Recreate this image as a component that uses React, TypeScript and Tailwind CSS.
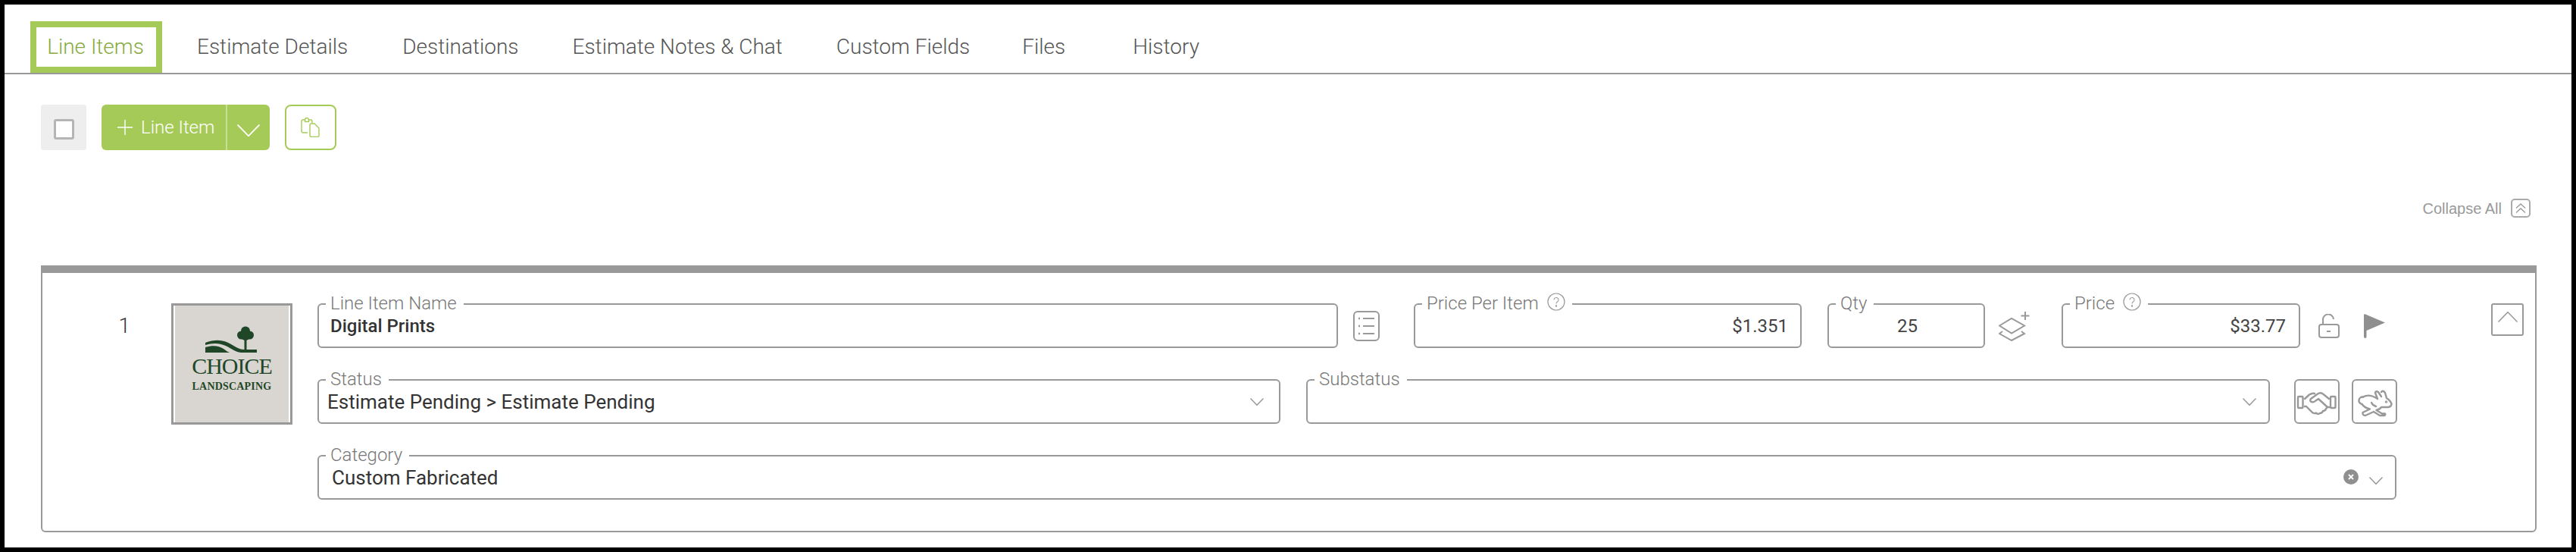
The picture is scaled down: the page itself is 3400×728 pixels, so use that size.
import React from "react";

const font = "font-['Roboto',sans-serif]";

function Help() {
  return (
    <svg width="24" height="24" viewBox="0 0 24 24" fill="none" stroke="#999" strokeWidth="1.2" className="ml-[11px] shrink-0 -mt-[4px]">
      <circle cx="12" cy="12" r="11" />
      <path d="M9 9.5a3 3 0 1 1 4.6 2.5c-1 .7-1.6 1.2-1.6 2.5" strokeWidth="1.1" />
      <circle cx="12" cy="17.5" r=".6" fill="#999" />
    </svg>
  );
}

function Chevron({ w = 18, h = 10, color = "#999", sw = 1.5, up = false }: { w?: number; h?: number; color?: string; sw?: number; up?: boolean }) {
  return (
    <svg width={w} height={h} viewBox={`0 0 ${w} ${h}`} fill="none" stroke={color} strokeWidth={sw} className="shrink-0">
      <path d={up ? `M0.5 ${h - 0.5}L${w / 2} 0.7L${w - 0.5} ${h - 0.5}` : `M0.5 0.5L${w / 2} ${h - 0.7}L${w - 0.5} 0.5`} />
    </svg>
  );
}

function Field({ label, help, className, children }: { label: string; help?: boolean; className: string; children?: React.ReactNode }) {
  return (
    <div className={`relative h-[59px] border-2 border-[#999] rounded-[6px] flex items-center ${className}`}>
      <div className="absolute -top-[17px] left-[9px] h-[30px] pl-[6px] pr-[9px] bg-white flex items-center text-[24px] font-light text-[#777] whitespace-nowrap leading-none">
        {label}
        {help && <Help />}
      </div>
      {children}
    </div>
  );
}

const tabs: [string, string][] = [
  ["Estimate Details", "ml-[46px] mr-[36px]"],
  ["Destinations", "ml-[36px] mr-[36px]"],
  ["Estimate Notes & Chat", "ml-[35px] mr-[37px]"],
  ["Custom Fields", "ml-[34px] mr-[36px]"],
  ["Files", "ml-[33px] mr-[45px]"],
  ["History", "ml-[44px]"],
];

function Logo() {
  return (
    <div className="w-[160px] h-[160px] shrink-0 border-[3px] border-[#999] bg-white px-[2px]">
      <div className="h-full bg-[#d9d6d1] flex flex-col items-center pt-[27px]">
        <svg width="68" height="36" viewBox="0 0 68 36" className="-ml-[2px] shrink-0">
          <g fill="#1f4727">
            <circle cx="53" cy="6.500" r="6" />
            <circle cx="47.500" cy="12" r="5.500" />
            <circle cx="58.500" cy="12" r="5.500" />
            <circle cx="53" cy="13" r="6" />
            <path d="M51.500 14h3v18h-3z" />
            <path d="M0 22c15-6 26-3 34 2 7 4 11 7 17 7h17v4H47c-8-1-12-5-18-8C19 22 10 22 0 25z" />
            <path d="M0 28c10-3 18-2 24 2 3 2 5 4 8 5H0z" />
          </g>
        </svg>
        <div className="font-['Liberation_Serif',serif] text-[#1f4727] text-[30px] leading-none mt-[2px] tracking-[-1px] whitespace-nowrap">CHOICE</div>
        <div className="font-['Liberation_Serif',serif] text-[#1f4727] text-[14px] leading-none mt-[5px] tracking-[0.2px] font-bold whitespace-nowrap">LANDSCAPING</div>
      </div>
    </div>
  );
}

export default function App() {
  return (
    <div className={`${font} h-[728px] w-[3400px] border-[6px] border-black bg-white flex flex-col overflow-hidden`}>
      {/* Tabs */}
      <div className="h-[92px] border-b-2 border-[#999] flex items-end pl-[34px] shrink-0">
        <div className="h-[68px] w-[174px] border-[8px] border-[#a6ca58] flex items-center justify-center text-[28px] font-light text-[#86ab3c] whitespace-nowrap leading-none pr-[2px]">
          Line Items
        </div>
        {tabs.map(([t, m]) => (
          <div key={t} className={`h-[68px] flex items-center text-[28px] font-light text-[#555] whitespace-nowrap leading-none ${m}`}>
            {t}
          </div>
        ))}
      </div>

      {/* Toolbar */}
      <div className="flex items-stretch h-[60px] mt-[40px] ml-[48px] shrink-0">
        <div className="w-[60px] bg-[#eeeeee] rounded-[4px] flex items-center justify-center">
          <div className="w-[27px] h-[27px] mt-[5px] bg-white border-[3px] border-[#b5b5b5] rounded-[3px]" />
        </div>
        <div className="ml-[20px] w-[222px] bg-[#a6ca58] rounded-[6px] flex items-center text-white">
          <svg width="20" height="20" viewBox="0 0 20 20" stroke="white" strokeWidth="1.4" className="ml-[21px] shrink-0">
            <path d="M10 0v20M0 10h20" />
          </svg>
          <span className="ml-[11px] text-[24px] font-light whitespace-nowrap leading-none">Line Item</span>
          <div className="ml-[15px] h-full w-[2px] bg-[#c9df95] shrink-0" />
          <div className="flex-1 flex justify-center pt-[8px]">
            <Chevron w={30} h={16} color="white" sw={1.8} />
          </div>
        </div>
        <div className="ml-[20px] w-[68px] border-2 border-[#a6ca58] rounded-[8px] flex items-center justify-center">
          <svg width="26" height="26" viewBox="0 0 26 26" fill="none" stroke="#a6ca58" strokeWidth="1.4">
            <path d="M9 20H3a2 2 0 0 1-2-2V5a2 2 0 0 1 2-2h2.500a2.500 2.500 0 0 1 5 0H13a2 2 0 0 1 2 2v2" />
            <path d="M5.500 3v2.500h5V3" />
            <path d="M14 8h4l6 6v9.500a2 2 0 0 1-2 2h-8a2 2 0 0 1-2-2V10a2 2 0 0 1 2-2z" />
          </svg>
        </div>
      </div>

      {/* Collapse all */}
      <div className="flex items-center justify-end h-[25px] mt-[64px] mr-[54px] shrink-0">
        <span className="font-['Liberation_Sans',sans-serif] text-[20px] text-[#999] leading-none whitespace-nowrap">Collapse All</span>
        <div className="ml-[12px] w-[26px] h-[25px] border-2 border-[#aaa] rounded-[5px] flex items-center justify-center">
          <svg width="16" height="14" viewBox="0 0 16 14" fill="none" stroke="#999" strokeWidth="1.3">
            <path d="M2 6.500L8 1l6 5.500M2 12.500L8 7l6 5.500" />
          </svg>
        </div>
      </div>

      {/* Card */}
      <div className="mt-[63px] ml-[48px] w-[3294px] h-[352px] border-2 border-t-[10px] border-[#999] rounded-b-[6px] flex pt-[40px] shrink-0 items-start">
        <div className="w-[170px] shrink-0 flex justify-end pr-[54px] pt-[16px] text-[28px] font-light text-[#333] leading-none">1</div>
        <Logo />
        <div className="ml-[33px] w-[2744px] shrink-0 flex flex-col gap-[41px]">
          {/* Row 1 */}
          <div className="flex items-center">
            <Field label="Line Item Name" className="w-[1347px] shrink-0 pl-[15px]">
              <span className="text-[24px] font-medium text-[#333] leading-none whitespace-nowrap">Digital Prints</span>
            </Field>
            <svg width="35" height="40" viewBox="0 0 35 40" fill="none" stroke="#999" strokeWidth="2" className="ml-[20px] shrink-0">
              <rect x="1" y="1" width="33" height="38" rx="5" />
              <path d="M7 10h2M7 20h2M7 30h2" strokeWidth="2.500" />
              <path d="M13 10h15M13 20h15M13 30h15" />
            </svg>
            <Field label="Price Per Item" help className="ml-[45px] w-[512px] shrink-0 justify-end pr-[16px]">
              <span className="text-[24px] font-normal text-[#444] leading-none">$1.351</span>
            </Field>
            <Field label="Qty" className="ml-[34px] w-[208px] shrink-0 pl-[90px]">
              <span className="text-[24px] font-normal text-[#444] leading-none">25</span>
            </Field>
            <svg width="42" height="40" viewBox="0 0 42 40" fill="none" stroke="#999" strokeWidth="2" className="ml-[18px] shrink-0">
              <path d="M1 19.500L17 10l17 9.500-17 10z" />
              <path d="M5 27L1 30l16 9 17-9-4-3" />
              <path d="M35 1v11M29.500 6.500h11" />
            </svg>
            <Field label="Price" help className="ml-[41px] w-[315px] shrink-0 justify-end pr-[17px]">
              <span className="text-[24px] font-normal text-[#444] leading-none">$33.77</span>
            </Field>
            <svg width="28" height="32" viewBox="0 0 28 32" fill="none" stroke="#999" strokeWidth="2" className="ml-[24px] shrink-0">
              <rect x="1" y="14" width="26" height="17" rx="3" />
              <path d="M6 14V8a7 7 0 0 1 14-1" />
              <path d="M11 23h5" />
            </svg>
            <svg width="28" height="32" viewBox="0 0 28 32" className="ml-[32px] shrink-0">
              <path d="M0 1.500Q0 0 1.500 .3L28 11.500 3.500 22V30q0 2-1.700 2T0 30z" fill="#8f8f8f" />
            </svg>
            <div className="ml-[140px] -mt-[16px] w-[43px] h-[43px] border-2 border-[#999] rounded-[3px] shrink-0 flex items-start justify-center pt-[9px]">
              <Chevron w={26} h={14} sw={1.5} up />
            </div>
          </div>
          {/* Row 2 */}
          <div className="flex items-center">
            <Field label="Status" className="w-[1271px] shrink-0 pl-[11px] pr-[20px] justify-between">
              <span className="text-[26px] font-normal text-[#333] leading-none whitespace-nowrap">Estimate Pending &gt; Estimate Pending</span>
              <Chevron />
            </Field>
            <Field label="Substatus" className="ml-[34px] w-[1272px] shrink-0 justify-end pr-[16px]">
              <Chevron />
            </Field>
            <div className="ml-[32px] w-[60px] h-[59px] border-2 border-[#999] rounded-[6px] shrink-0 flex items-center justify-center">
              <svg width="56" height="55" viewBox="2 2 56 55" fill="none" stroke="#999" strokeWidth="2.400" strokeLinejoin="round" strokeLinecap="round">
                <rect x="5" y="23" width="6.500" height="15" rx="1" />
                <rect x="48" y="23" width="6.500" height="15" rx="1" />
                <path d="M46 26L38 19.500Q34 17 31 19.500L22 26Q20 29 23 30Q26 31 29 28L32 26L44 37" />
                <path d="M14 26L20 20.500Q24 18 27 19" />
                <path d="M14 36H16L24 44Q27 46 29 44.500Q31 47 34 45Q37 45 38 42Q41 42 42 39L44 37H46" />
              </svg>
            </div>
            <div className="ml-[16px] w-[60px] h-[59px] border-2 border-[#999] rounded-[6px] shrink-0 flex items-center justify-center">
              <svg width="56" height="55" viewBox="2 2 56 55" fill="none" stroke="#999" strokeWidth="2.400" strokeLinejoin="round" strokeLinecap="round">
                <path d="M15 23.500a4.800 4.800 0 1 0-1.500 9.500" />
                <path d="M15 23.500C21 20 28 22 34 26L31 18Q32 15 35 17L39 23" />
                <path d="M39 17Q41 14 44 18L46 25Q52 29 52.500 33Q52 37 47 37H39Q37 40 32.500 41L40 45.500H44Q45 47.500 43 48H37L29 43L18 48Q14 48 14.500 44L24 39.500Q17 38 13.500 33" />
                <path d="M26 31Q28 35 32 36" />
                <circle cx="45.500" cy="30" r=".6" fill="#999" />
              </svg>
            </div>
          </div>
          {/* Row 3 */}
          <div className="flex items-center">
            <Field label="Category" className="w-[2744px] shrink-0 pl-[17px] pr-[16px]">
              <span className="text-[26px] font-normal text-[#333] leading-none whitespace-nowrap flex-1">Custom Fabricated</span>
              <div className="w-[20px] h-[20px] rounded-full bg-[#8f8f8f] flex items-center justify-center mr-[14px] -mt-[2px]">
                <svg width="8" height="8" viewBox="0 0 8 8" stroke="white" strokeWidth="1.800"><path d="M1 1l6 6M7 1L1 7" /></svg>
              </div>
              <div className="mt-[8px]"><Chevron /></div>
            </Field>
          </div>
        </div>
      </div>
    </div>
  );
}
